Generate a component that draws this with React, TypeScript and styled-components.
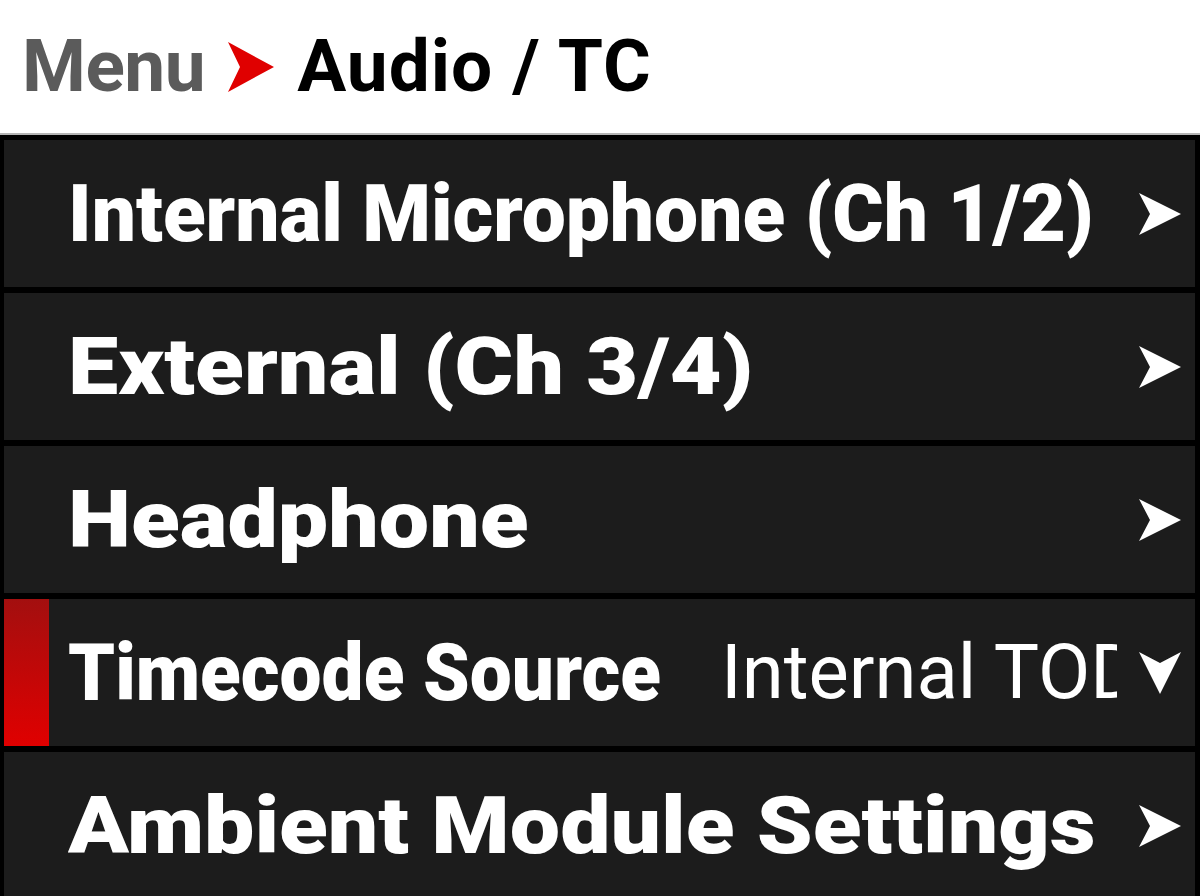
import React from "react";
import styled, { createGlobalStyle } from "styled-components";

const GlobalStyle = createGlobalStyle`
  html, body {
    margin: 0;
    padding: 0;
    background: #ffffff;
    overflow: hidden;
  }
  body {
    font-family: Roboto, "Liberation Sans", sans-serif;
  }
`;

const Screen = styled.div`
  width: 1200px;
  height: 896px;
  overflow: hidden;
  display: flex;
  flex-direction: column;
`;

const Header = styled.div`
  height: 133px;
  flex-shrink: 0;
  display: flex;
  align-items: center;
  gap: 22px;
  padding-left: 22px;
  background: #ffffff;
  font-size: 73px;
  font-weight: 700;
  border-bottom: 2px solid #b4b4b4;
`;

const Crumb = styled.span<{ $current?: boolean }>`
  color: ${(p) => (p.$current ? "#000000" : "#5b5b5b")};
  line-height: 1;
  letter-spacing: ${(p) => (p.$current ? "1px" : "-0.5px")};
`;

const List = styled.div`
  flex: 1;
  background: #000000;
  padding: 5px 5px 0 4px;
  display: flex;
  flex-direction: column;
  gap: 6px;
`;

const Row = styled.div`
  height: 147px;
  flex-shrink: 0;
  background: #1c1c1c;
  display: flex;
  align-items: center;
  color: #ffffff;
`;

const Marker = styled.div<{ $on?: boolean }>`
  width: 45px;
  align-self: stretch;
  flex-shrink: 0;
  background: ${(p) =>
    p.$on ? "linear-gradient(180deg, #a30f0f 0%, #e00000 100%)" : "transparent"};
`;

const Label = styled.div<{ $stretch: number }>`
  flex: 1;
  margin-left: 19px;
  font-size: 80px;
  font-weight: 900;
  white-space: nowrap;
  line-height: 1;
  transform: scaleX(${(p) => p.$stretch});
  transform-origin: left center;
`;

const Value = styled.div`
  width: 396px;
  overflow: hidden;
  white-space: nowrap;
  font-size: 76px;
  font-weight: 400;
  line-height: 1.2;
`;

const IconCell = styled.div`
  width: 46px;
  height: 46px;
  margin: 0 12px 0 20px;
  flex-shrink: 0;
  display: flex;
  align-items: center;
  justify-content: center;
`;

const Dart = ({ color = "#ffffff", size = 46, down = false }: { color?: string; size?: number; down?: boolean }) => (
  <svg
    width={size}
    height={size}
    viewBox="0 0 46 46"
    style={down ? { transform: "rotate(90deg)" } : undefined}
  >
    <path d="M2 2 L44 23 L2 44 L13 23 Z" fill={color} />
  </svg>
);

const RedDart = styled.span`
  display: inline-flex;
  align-items: center;
`;

type Item = { label: string; stretch: number; value?: string; selected?: boolean };

const items: Item[] = [
  { label: "Internal Microphone (Ch 1/2)", stretch: 0.98 },
  { label: "External (Ch 3/4)", stretch: 1.12 },
  { label: "Headphone", stretch: 1.12 },
  { label: "Timecode Source", stretch: 0.934, value: "Internal TOD", selected: true },
  { label: "Ambient Module Settings", stretch: 1.119 },
];

export default function App() {
  return (
    <Screen>
      <GlobalStyle />
      <Header>
        <Crumb>Menu</Crumb>
        <RedDart>
          <svg width="48" height="52" viewBox="0 0 48 52">
            <path d="M1 1 L47 26 L1 51 L13 26 Z" fill="#e00000" />
          </svg>
        </RedDart>
        <Crumb $current>Audio / TC</Crumb>
      </Header>
      <List>
        {items.map((it) => (
          <Row key={it.label}>
            <Marker $on={it.selected} />
            <Label $stretch={it.stretch}>{it.label}</Label>
            {it.value && <Value>{it.value}</Value>}
            <IconCell>
              <Dart down={!!it.value} />
            </IconCell>
          </Row>
        ))}
      </List>
    </Screen>
  );
}
